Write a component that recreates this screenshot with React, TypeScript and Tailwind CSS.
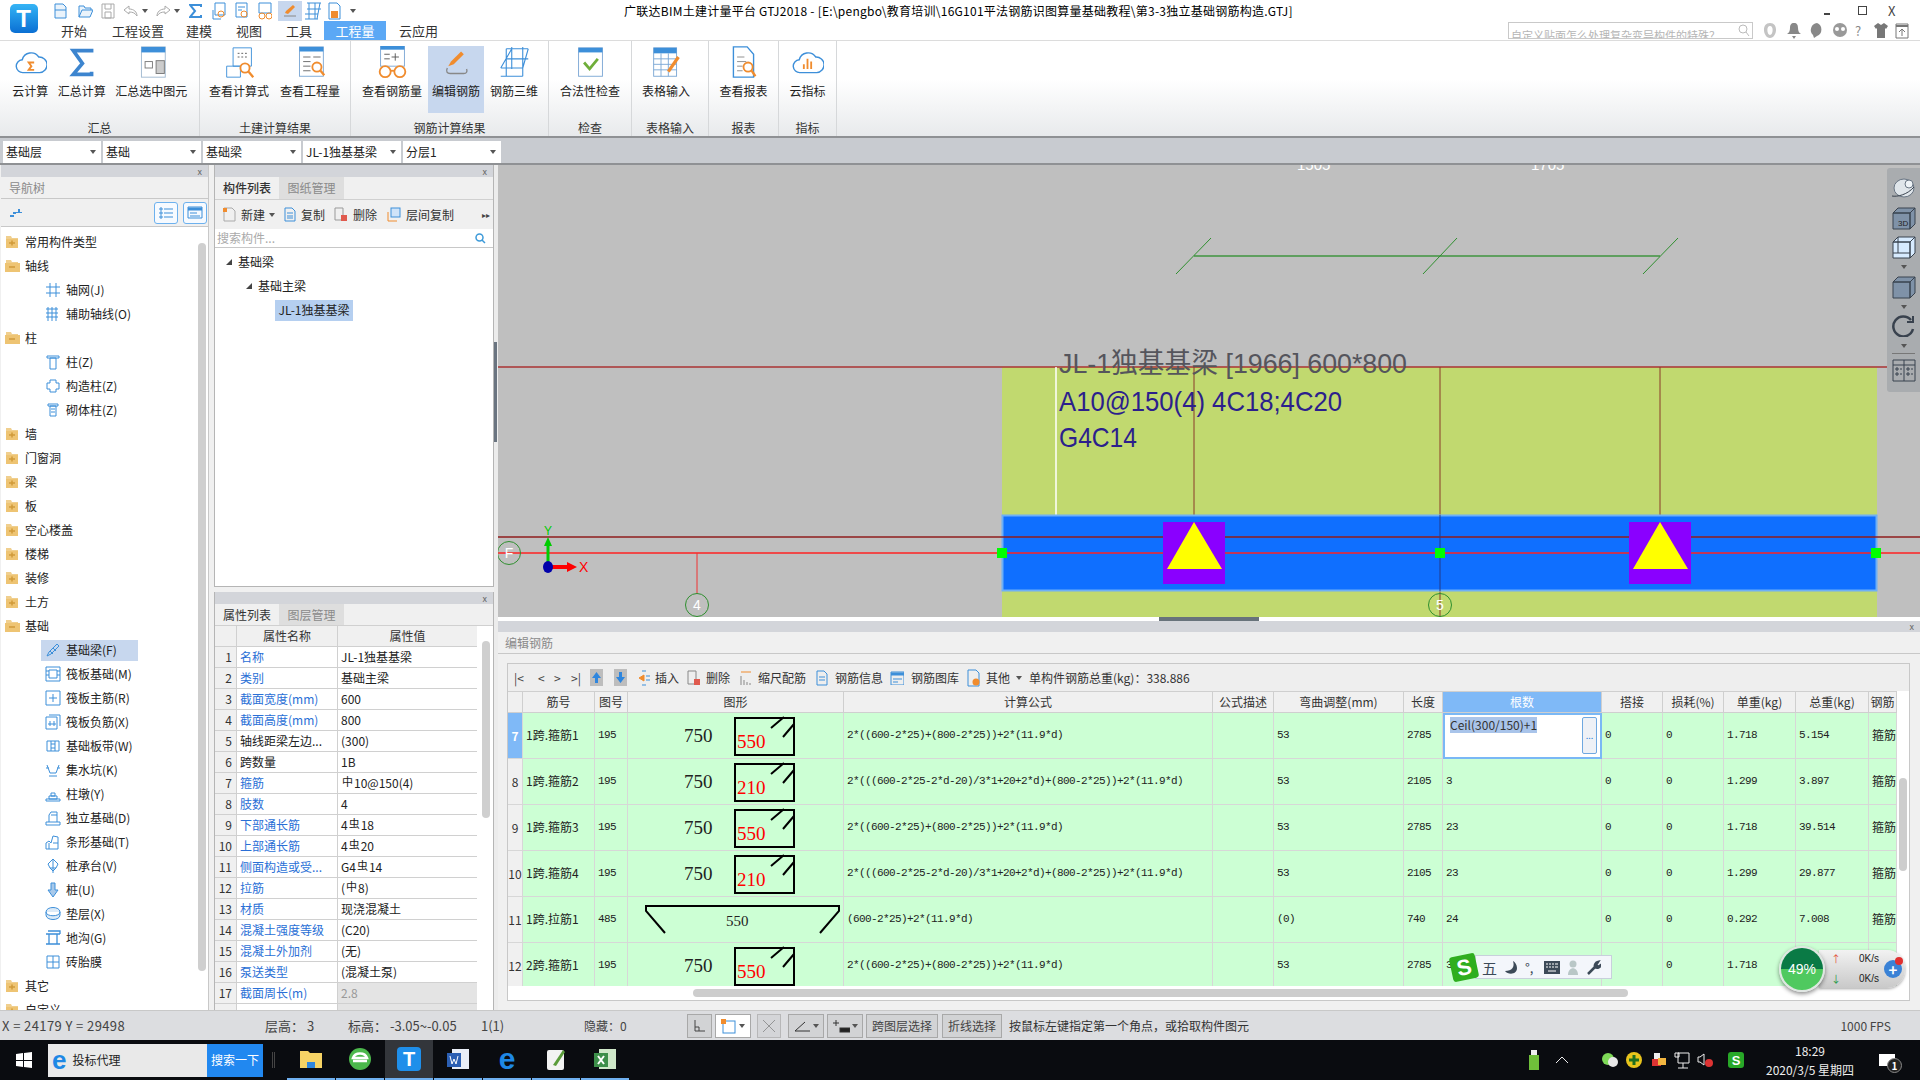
import type { ReactNode } from 'react';

const BLUE = '#3d8fd9';
const ORANGE = '#f08c2e';

function Ico({ w = 16, h = 16, vb, children }: { w?: number; h?: number; vb?: string; children: ReactNode }) {
  return (
    <svg width={w} height={h} viewBox={vb ?? `0 0 ${w} ${h}`} fill="none" stroke={BLUE} strokeWidth="1" className="shrink-0">
      {children}
    </svg>
  );
}

const ribbonIcons: Record<string, ReactNode> = {
  cloudSum: (
    <>
      <path d="M10 29a7 7 0 0 1-1-14 10 10 0 0 1 18-3 8 8 0 0 1 1 17z" strokeWidth="1.5" fill="#fff" />
      <path d="M22 18h-6l3 4-3 4h6" stroke={ORANGE} strokeWidth="2" />
    </>
  ),
  sigma: <path d="M29 7V5H9l10 14L9 31h20v-3" strokeWidth="4" stroke="#3d85cf" />,
  sumSel: (
    <>
      <rect x="7" y="1" width="26" height="33" fill="#fff" stroke="#9fb8d0" />
      <rect x="7" y="1" width="26" height="6" fill={BLUE} stroke="none" />
      <rect x="11" y="17" width="8" height="7" stroke="#777" />
      <rect x="23" y="16" width="9" height="14" fill="#ccc" stroke="#777" />
    </>
  ),
  viewCalc: (
    <>
      <path d="M11 2h20v20H11zM4 22h15v12H4z" fill="#fff" />
      <path d="M16 8h2M20 8h2M24 8h2M16 12h2M20 12h2M24 12h2" stroke="#555" />
      <circle cx="24" cy="24" r="5" stroke={ORANGE} strokeWidth="2" fill="#fff" />
      <path d="M28 28l5 6" stroke={ORANGE} strokeWidth="2.5" />
    </>
  ),
  viewQty: (
    <>
      <rect x="6" y="1" width="26" height="32" fill="#fff" stroke="#7aa6d4" />
      <rect x="6" y="1" width="26" height="5" fill={BLUE} stroke="none" />
      <path d="M10 12h8M21 12h8M10 17h8M10 22h8M10 27h8" stroke="#666" />
      <circle cx="25" cy="23" r="5" stroke={ORANGE} strokeWidth="2" fill="#fff" />
      <path d="M29 27l4 5" stroke={ORANGE} strokeWidth="2.5" />
    </>
  ),
  glasses: (
    <>
      <rect x="5" y="0" width="26" height="22" fill="#fff" stroke="#7aa6d4" />
      <rect x="5" y="0" width="26" height="4" fill={BLUE} stroke="none" />
      <path d="M9 9h6M9 14h6M21 8v8M17 12h8" stroke="#555" />
      <circle cx="10" cy="28" r="6" stroke={ORANGE} strokeWidth="2" fill="#fff" />
      <circle cx="26" cy="28" r="6" stroke={ORANGE} strokeWidth="2" fill="#fff" />
      <path d="M16 27h4" stroke={ORANGE} strokeWidth="2" />
    </>
  ),
  edit: (
    <>
      <path d="M9 22l3-5L23 6l3 3-11 11z" fill={ORANGE} stroke="none" />
      <path d="M8 24c-2 4 0 6 3 6h15c3 0 4-2 3-5" stroke="#888" strokeWidth="1.5" />
    </>
  ),
  rebar3d: <path d="M9 3h24M9 14h24M3 24h24M3 33h24M15 1v24M27 1v32M9 3v30M33 3L27 24M15 3L3 24" strokeWidth="1.2" />,
  check: (
    <>
      <rect x="5" y="2" width="26" height="31" fill="#fff" stroke="#7aa6d4" />
      <rect x="5" y="2" width="26" height="5" fill={BLUE} stroke="none" />
      <path d="M11 18l6 7 9-11" stroke="#6fae3a" strokeWidth="3" />
    </>
  ),
  table: (
    <>
      <rect x="4" y="2" width="25" height="31" fill="#fff" stroke="#7aa6d4" />
      <rect x="4" y="2" width="25" height="6" fill={BLUE} stroke="none" />
      <path d="M4 14h25M4 20h25M4 26h25M12 8v25M20 8v25" stroke="#7aa6d4" />
      <path d="M20 28L31 12" stroke={ORANGE} strokeWidth="3.5" />
    </>
  ),
  report: (
    <>
      <path d="M7 1h15l7 8v25H7z" fill="#fff" strokeWidth="1.5" />
      <path d="M11 12h8M11 17h10M11 22h6M11 27h6" stroke="#888" />
      <circle cx="23" cy="23" r="5" stroke={ORANGE} strokeWidth="2" fill="#fff" />
      <path d="M27 27l4 6" stroke={ORANGE} strokeWidth="2.5" />
    </>
  ),
  cloudBar: (
    <>
      <path d="M10 29a7 7 0 0 1-1-14 10 10 0 0 1 18-3 8 8 0 0 1 1 17z" strokeWidth="1.5" fill="#fff" />
      <path d="M14 25v-5M18 25V14M22 25v-8" stroke={ORANGE} strokeWidth="2" />
    </>
  ),
};

function RBtn({ icon, label, w, on }: { icon: string; label: string; w: number; on?: boolean }) {
  return (
    <div style={{ width: w }} className={`flex h-[67px] flex-col items-center ${on ? 'bg-[#c7d7ee]' : ''}`}>
      <div className="h-[33px]">
        <Ico w={33} h={33} vb="0 0 36 36">{ribbonIcons[icon]}</Ico>
      </div>
      <span className="mt-[3px] whitespace-nowrap text-[12px] leading-[18px] text-[#222]">{label}</span>
    </div>
  );
}

function RGroup({ w, label, pl = 0, children }: { w: number; label: string; pl?: number; children: ReactNode }) {
  return (
    <div style={{ width: w }} className="flex flex-col border-r border-[#d6d8da]">
      <div style={{ paddingLeft: pl }} className={`flex h-[72px] pt-[5px] ${pl ? '' : 'justify-center'}`}>{children}</div>
      <div className="mt-[6px] text-center text-[12px] leading-[18px] text-[#333]">{label}</div>
    </div>
  );
}

function Combo({ label }: { label: string }) {
  return (
    <div className="flex h-[22px] w-[98px] items-center justify-between bg-white pl-[3px] pr-[5px] text-[12px] text-[#222]">
      <span>{label}</span>
      <Caret />
    </div>
  );
}

function Folder({ open }: { open?: boolean }) {
  return (
    <svg width="16" height="14" viewBox="0 0 16 14" className="shrink-0">
      <path d="M2 1h5l1 2h6v10H2z" fill="#f0cf8e" />
      <rect x={open ? 1 : 2} y="4" width={open ? 15 : 12} height="9" fill="#eec473" />
      <path d={open ? 'M5 8h6' : 'M5 8h6M8 5.5v5'} stroke="#d19a3a" strokeWidth="1.5" />
    </svg>
  );
}

const treeIcons: Record<string, ReactNode> = {
  grid: <path d="M1 5h14M1 11h14M5 1v14M11 1v14" />,
  grid2: <path d="M1 3h12M1 7h12M1 11h12M3 1v14M7 1v14M11 1v14" />,
  col: <path d="M2 2h12v2H2zM5 4h6v11H5z" />,
  col2: <path d="M5 2h6v3h3v6h-3v3H5v-3H2V5h3z" />,
  col3: <path d="M3 2h10v2H3zM5 4h6v10H5zM6 7h4M6 10h4" />,
  beam: <path d="M2 14l2-4 8-8 2 2-8 8zM5 9l3 3M8 6l3 3" />,
  raft: <path d="M1 1h14v14H1zM4 4h8v8H4zM1 5h3M1 9h3M12 5h3M12 9h3" />,
  raftMain: <path d="M1 1h14v14H1zM8 4v8M4 8h8" />,
  raftNeg: <path d="M1 3h11v12H1zM4 1h11v11M5 7v5M9 7v5M3 10h8" />,
  strip: <path d="M2 3h12v10H2zM6 3v10M10 3v10M6 6h4M6 10h4" />,
  pit: <path d="M2 3l3 8h6l3-8M4 14h8M1 6h3M12 6h3" />,
  pier: <path d="M1 13h14v2H1zM4 10h8v3H4zM6 7h4v3H6z" />,
  iso: <path d="M1 12h14v3H1zM4 12V5l2-3h6v10M6 5h6" />,
  bar: <path d="M1 15V9l3-2 2 2 2-7 5 1v12zM4 15V9M8 9h5" />,
  cap: <path d="M8 1L3 6l2 4h6l2-4zM8 1v14M5 10l3 3 3-3" />,
  pile: <path d="M6 1h4v7h3l-5 7-5-7h3z" fill="#a8c9ea" />,
  pad: <path d="M1 6c0-6 14-6 14 0v3c0 6-14 6-14 0zM1 6c0 5 14 5 14 0" fill="#dceaf7" />,
  ditch: <path d="M1 4h14M3 1h12v3M4 4v10M12 4v10M1 14h14" strokeWidth="1.3" />,
  brick: <path d="M2 2h12v12H2zM8 2v12M2 8h12" />,
};

type TreeRow = { t: string; open?: boolean; icon?: string; sel?: boolean };
const tree: TreeRow[] = [
  { t: '常用构件类型' },
  { t: '轴线', open: true },
  { t: '轴网(J)', icon: 'grid' },
  { t: '辅助轴线(O)', icon: 'grid2' },
  { t: '柱', open: true },
  { t: '柱(Z)', icon: 'col' },
  { t: '构造柱(Z)', icon: 'col2' },
  { t: '砌体柱(Z)', icon: 'col3' },
  { t: '墙' },
  { t: '门窗洞' },
  { t: '梁' },
  { t: '板' },
  { t: '空心楼盖' },
  { t: '楼梯' },
  { t: '装修' },
  { t: '土方' },
  { t: '基础', open: true },
  { t: '基础梁(F)', icon: 'beam', sel: true },
  { t: '筏板基础(M)', icon: 'raft' },
  { t: '筏板主筋(R)', icon: 'raftMain' },
  { t: '筏板负筋(X)', icon: 'raftNeg' },
  { t: '基础板带(W)', icon: 'strip' },
  { t: '集水坑(K)', icon: 'pit' },
  { t: '柱墩(Y)', icon: 'pier' },
  { t: '独立基础(D)', icon: 'iso' },
  { t: '条形基础(T)', icon: 'bar' },
  { t: '桩承台(V)', icon: 'cap' },
  { t: '桩(U)', icon: 'pile' },
  { t: '垫层(X)', icon: 'pad' },
  { t: '地沟(G)', icon: 'ditch' },
  { t: '砖胎膜', icon: 'brick' },
  { t: '其它' },
  { t: '自定义' },
];

function Strip() {
  return (
    <div className="flex h-[12px] shrink-0 items-center justify-end bg-[#d3d5da] pr-[6px] text-[9px] leading-none text-[#666]">x</div>
  );
}

const Steel = ({ c }: { c: string }) => <span className="relative top-[-2px] mx-[1px] text-[11px]">{c}</span>;

const props: { n: string; v: ReactNode; link?: boolean; dim?: boolean }[] = [
  { n: '名称', v: 'JL-1独基基梁', link: true },
  { n: '类别', v: '基础主梁', link: true },
  { n: '截面宽度(mm)', v: '600', link: true },
  { n: '截面高度(mm)', v: '800', link: true },
  { n: '轴线距梁左边...', v: '(300)' },
  { n: '跨数量', v: '1B' },
  { n: '箍筋', v: <><Steel c="中" />10@150(4)</>, link: true },
  { n: '肢数', v: '4', link: true },
  { n: '下部通长筋', v: <>4<Steel c="虫" />18</>, link: true },
  { n: '上部通长筋', v: <>4<Steel c="虫" />20</>, link: true },
  { n: '侧面构造或受...', v: <>G4<Steel c="虫" />14</>, link: true },
  { n: '拉筋', v: <>(<Steel c="中" />8)</>, link: true },
  { n: '材质', v: '现浇混凝土', link: true },
  { n: '混凝土强度等级', v: '(C20)', link: true },
  { n: '混凝土外加剂', v: '(无)', link: true },
  { n: '泵送类型', v: '(混凝土泵)', link: true },
  { n: '截面周长(m)', v: '2.8', link: true, dim: true },
];

const F1 = '2*((600-2*25)+(800-2*25))+2*(11.9*d)';
const F2 = '2*(((600-2*25-2*d-20)/3*1+20+2*d)+(800-2*25))+2*(11.9*d)';
const rebarRows = [
  { no: '7', name: '1跨.箍筋1', fig: '195', inner: '550', f: F1, adj: '53', len: '2785', cnt: '', unit: '1.718', total: '5.154' },
  { no: '8', name: '1跨.箍筋2', fig: '195', inner: '210', f: F2, adj: '53', len: '2105', cnt: '3', unit: '1.299', total: '3.897' },
  { no: '9', name: '1跨.箍筋3', fig: '195', inner: '550', f: F1, adj: '53', len: '2785', cnt: '23', unit: '1.718', total: '39.514' },
  { no: '10', name: '1跨.箍筋4', fig: '195', inner: '210', f: F2, adj: '53', len: '2105', cnt: '23', unit: '1.299', total: '29.877' },
  { no: '11', name: '1跨.拉筋1', fig: '485', inner: '', f: '(600-2*25)+2*(11.9*d)', adj: '(0)', len: '740', cnt: '24', unit: '0.292', total: '7.008' },
  { no: '12', name: '2跨.箍筋1', fig: '195', inner: '550', f: F1, adj: '53', len: '2785', cnt: '3', unit: '1.718', total: '' },
];

function Stirrup({ inner }: { inner: string }) {
  return (
    <svg width="216" height="46" className="block">
      <text x="56" y="29" fontFamily="Liberation Serif" fontSize="19" fill="#222">750</text>
      <rect x="107" y="5" width="59" height="37" fill="none" stroke="#000" strokeWidth="2" />
      <text x="109" y="35" fontFamily="Liberation Serif" fontSize="19" fill="#f00">{inner}</text>
      <path d="M143 15l13-11M155 24l11-13" stroke="#000" strokeWidth="2" />
    </svg>
  );
}

function TieShape() {
  return (
    <svg width="216" height="46" className="block">
      <path d="M37 36L18 14V9h193v5l-19 22" fill="none" stroke="#000" strokeWidth="2" />
      <text x="98" y="29" fontFamily="Liberation Serif" fontSize="15" fill="#222">550</text>
    </svg>
  );
}

const GRID = 'grid grid-cols-[15px_72px_33px_216px_369px_61px_130px_39px_159px_61px_61px_72px_73px_28px]';
const cell = 'flex items-center overflow-hidden whitespace-nowrap border-r border-b border-[#d7d7d7] pb-[1px] pl-[3px]';
const mono = "font-['Liberation_Mono','Noto_Sans_CJK_SC',monospace] text-[11px] tracking-[-0.6px] text-[#222]";

function BarTool({ icon, label, w, gap = 5 }: { icon: ReactNode; label: string; w?: number; gap?: number }) {
  return (
    <div className="flex shrink-0 items-center" style={{ width: w, gap }}>
      {icon}
      <span className="whitespace-nowrap text-[12px] text-[#333]">{label}</span>
    </div>
  );
}

function StatusBox({ children, w, cls = '' }: { children: ReactNode; w: number; cls?: string }) {
  return (
    <div style={{ width: w }} className={`flex h-[24px] shrink-0 items-center justify-center gap-[2px] border border-[#a8a8a8] bg-[#d2d3d5] text-[12px] text-[#444] ${cls}`}>
      {children}
    </div>
  );
}

function Caret() {
  return <span className="inline-block h-0 w-0 shrink-0 border-x-[3px] border-t-[4px] border-x-transparent border-t-[#555]" />;
}

function AppSlot({ children, active }: { children: ReactNode; active?: boolean }) {
  return (
    <div className={`flex h-[40px] w-[48px] shrink-0 flex-col items-center justify-center border-b-2 border-[#6fb0f0] ${active ? 'bg-[#33363b]' : ''}`}>
      {children}
    </div>
  );
}

export default function App() {
  return (
    <div className="relative flex h-[1080px] w-[1920px] flex-col overflow-hidden bg-[#f0f0f0] font-['Noto_Sans_CJK_SC','Liberation_Sans',sans-serif] text-[12px]">
      {/* title bar and menu */}
      <div className="flex h-[41px] shrink-0 border-b border-[#dcdcdc] bg-white">
        <div className="flex w-[44px] shrink-0 items-center justify-center pb-[3px] pl-[3px]">
          <div className="flex h-[29px] w-[28px] items-center justify-center rounded-[5px] bg-gradient-to-b from-[#35b4f5] to-[#0b6fd3] font-['Liberation_Sans',sans-serif] text-[24px] font-bold leading-none text-white">T</div>
        </div>
        <div className="flex min-w-0 flex-1 flex-col">
          <div className="flex h-[21px] items-center">
            <div className="flex w-[580px] items-center text-[#5f8fc0]">
              <div className="ml-[10px] flex w-[24px]"><Ico w={13} h={16}><path d="M1 1h8l3 3v11H1zM1 7h11" fill="#eaf3fb" /></Ico></div>
              <div className="flex w-[23px]"><Ico w={15} h={16}><path d="M1 14V3h5l1 2h6v2M1 14l3-7h11l-3 7z" fill="#eaf3fb" /></Ico></div>
              <div className="flex w-[21px]"><Ico w={14} h={16}><path d="M1 1h12v14H1zM4 1v5h6V1M4 9h6v6H4z" stroke="#aaa" /></Ico></div>
              <div className="flex w-[32px] items-center gap-[2px]"><Ico w={18} h={14}><path d="M7 2L2 6l5 4V8c4 0 6 1 8 4 0-4-3-7-8-7z" stroke="#aaa" /></Ico><Caret /></div>
              <div className="flex w-[35px] items-center gap-[2px]"><Ico w={18} h={14}><path d="M11 2l5 4-5 4V8C7 8 5 9 3 12c0-4 3-7 8-7z" stroke="#aaa" /></Ico><Caret /></div>
              <div className="flex w-[23px]"><Ico w={13} h={16}><path d="M12 4V2H1l5 6-5 6h11v-2" strokeWidth="2" /></Ico></div>
              <div className="flex w-[23px]"><Ico w={14} h={18}><path d="M3 1h10v12H3zM1 8v9h8" /><circle cx="9" cy="12" r="3" stroke={ORANGE} /></Ico></div>
              <div className="flex w-[23px]"><Ico w={14} h={18}><path d="M1 1h11v14H1zM3 5h7M3 8h4" /><circle cx="9" cy="12" r="3" stroke={ORANGE} /></Ico></div>
              <div className="flex w-[20px]"><Ico w={14} h={18}><path d="M1 1h12v10H1z" /><circle cx="4" cy="14" r="3" stroke={ORANGE} /><circle cx="11" cy="14" r="3" stroke={ORANGE} /></Ico></div>
              <div className="flex h-[20px] w-[24px] items-center justify-center bg-[#c7d7ee]"><Ico w={16} h={16}><path d="M3 10l1-2 7-6 2 2-7 7z" fill={ORANGE} stroke="none" /><path d="M2 13h12" stroke="#888" /></Ico></div>
              <div className="ml-[2px] flex w-[24px]"><Ico w={17} h={18}><path d="M3 1h14M3 7h14M1 12h13M1 17h13M5 1v16M11 1v16M16 1l-3 16" /></Ico></div>
              <div className="flex w-[22px]"><Ico w={13} h={18}><path d="M1 1h8l3 3v13H1z" /><rect x="3" y="9" width="7" height="7" fill={ORANGE} stroke="none" /></Ico></div>
              <Caret />
            </div>
            <span className="whitespace-nowrap text-[12px] tracking-[0.25px] text-black">广联达BIM土建计量平台 GTJ2018 - [E:\pengbo\教育培训\16G101平法钢筋识图算量基础教程\第3-3独立基础钢筋构造.GTJ]</span>
            <div className="ml-auto flex w-[96px] items-center text-[#444]">
              <span className="h-[2px] w-[6px] translate-y-[3px] bg-[#444]" />
              <span className="ml-[28px] h-[9px] w-[9px] border border-[#444]" />
              <span className="ml-[21px] text-[13px] leading-none">X</span>
            </div>
          </div>
          <div className="flex h-[19px] items-stretch">
            <span className="ml-[17px] w-[51px] text-[13px] leading-[19px] text-[#333]">开始</span>
            <span className="w-[74px] text-[13px] leading-[19px] text-[#333]">工程设置</span>
            <span className="w-[50px] text-[13px] leading-[19px] text-[#333]">建模</span>
            <span className="w-[50px] text-[13px] leading-[19px] text-[#333]">视图</span>
            <span className="w-[38px] text-[13px] leading-[19px] text-[#333]">工具</span>
            <span className="w-[62px] bg-[#5ba8f5] text-center text-[13px] leading-[19px] text-white">工程量</span>
            <span className="ml-[13px] text-[13px] leading-[19px] text-[#333]">云应用</span>
            <div className="ml-auto flex items-center">
              <div className="flex h-[17px] w-[245px] items-end justify-between overflow-hidden border border-[#c9c9c9] px-[2px] text-[11px] leading-[12px] text-[#b5b5b5]">
                <span className="translate-y-[3px] whitespace-nowrap">自定义贴面怎么处理复杂变异构件的特殊？</span>
                <svg width="12" height="14" viewBox="0 0 12 14" fill="none" stroke="#bbb"><circle cx="5" cy="5" r="4" /><path d="M8 8l3 4" /></svg>
              </div>
              <div className="ml-[9px] flex w-[158px] items-center gap-[7px]">
                <svg width="17" height="17" viewBox="0 0 17 17" fill="#c4c4c4"><path d="M8 1c-9 0-7 15 0 15s9-15 0-15zm0 3c4 0 3 9 0 9s-4-9 0-9z" /></svg>
                <svg width="16" height="17" viewBox="0 0 16 17" fill="#888"><path d="M8 1c-3 0-4 2-4 5 0 3-1 5-3 6h14c-2-1-3-3-3-6 0-3-1-5-4-5zM6 14h4l-2 3z" /></svg>
                <svg width="16" height="17" viewBox="0 0 16 17" fill="#888"><path d="M8 1a7 7 0 0 0-4 12l1 3 3-2a7 7 0 0 0 0-13z" /></svg>
                <svg width="16" height="17" viewBox="0 0 16 17" fill="#999"><circle cx="8" cy="8" r="7" /><circle cx="5" cy="7" r="2" fill="#fff" /><circle cx="11" cy="7" r="2" fill="#fff" /></svg>
                <span className="w-[12px] text-[13px] leading-none text-[#888]">?</span>
                <svg width="14" height="17" viewBox="0 0 14 17" fill="#777"><path d="M4 1L0 4l2 3 1-1v10h8V6l1 1 2-3-4-3-3 2z" /></svg>
                <svg width="14" height="17" viewBox="0 0 14 17" fill="none" stroke="#777"><path d="M1 2h12v14H1z" /><path d="M1 4h12" strokeWidth="2" /><path d="M7 14V8M4 10l3-3 3 3" /></svg>
              </div>
            </div>
          </div>
        </div>
      </div>

      {/* ribbon */}
      <div className="flex h-[97px] shrink-0 border-b-2 border-[#8f9194] bg-gradient-to-b from-white from-40% to-[#e8eaec]">
        <RGroup w={200} label="汇总" pl={1}>
          <RBtn icon="cloudSum" label="云计算" w={59} />
          <RBtn icon="sigma" label="汇总计算" w={44} />
          <RBtn icon="sumSel" label="汇总选中图元" w={96} />
        </RGroup>
        <RGroup w={151} label="土建计算结果" pl={2}>
          <RBtn icon="viewCalc" label="查看计算式" w={74} />
          <RBtn icon="viewQty" label="查看工程量" w={68} />
        </RGroup>
        <RGroup w={198} label="钢筋计算结果" pl={5}>
          <RBtn icon="glasses" label="查看钢筋量" w={72} />
          <RBtn icon="edit" label="编辑钢筋" w={56} on />
          <RBtn icon="rebar3d" label="钢筋三维" w={60} />
        </RGroup>
        <RGroup w={83} label="检查"><RBtn icon="check" label="合法性检查" w={70} /></RGroup>
        <RGroup w={77} label="表格输入" pl={4}><RBtn icon="table" label="表格输入" w={60} /></RGroup>
        <RGroup w={70} label="报表"><RBtn icon="report" label="查看报表" w={60} /></RGroup>
        <RGroup w={58} label="指标"><RBtn icon="cloudBar" label="云指标" w={50} /></RGroup>
      </div>

      {/* combos */}
      <div className="flex h-[27px] shrink-0 items-start gap-[2px] border-b-2 border-[#8f9194] bg-[#c8cbd0] pl-[3px] pt-[3px]">
        <Combo label="基础层" />
        <Combo label="基础" />
        <Combo label="基础梁" />
        <Combo label="JL-1独基基梁" />
        <Combo label="分层1" />
      </div>

      <div className="flex min-h-0 flex-1">
        {/* navigation tree */}
        <div className="flex w-[209px] shrink-0 flex-col border-r border-[#c8c8c8] pl-[1px]">
          <Strip />
          <div className="flex h-[22px] shrink-0 items-center border-b border-[#c8c8c8] pl-[8px] text-[12px] text-[#8a8a8a]">导航树</div>
          <div className="flex h-[28px] shrink-0 items-center justify-between border-b border-[#c8c8c8] pl-[8px] pr-[1px]">
            <svg width="13" height="12" viewBox="0 0 13 12" fill={BLUE}><path d="M1 8h4v2H1zM7 5h2V2h2v3h2v1H7z" /><rect x="4" y="5" width="3" height="2" /></svg>
            <div className="flex gap-[5px]">
              <div className="flex h-[22px] w-[24px] items-center justify-center rounded-[3px] border border-[#6db1ee] bg-[#f6faff]">
                <Ico w={14} h={13}><path d="M1 2h2v2H1zM1 6h2v2H1zM1 10h2v2H1zM5 3h9M5 7h9M5 11h9" /></Ico>
              </div>
              <div className="flex h-[22px] w-[24px] items-center justify-center rounded-[3px] border border-[#6db1ee] bg-[#f6faff]">
                <Ico w={16} h={13}><path d="M1 1h14v11H1z" /><path d="M1 3h14" strokeWidth="3" /><path d="M3 7h7M3 10h10" /></Ico>
              </div>
            </div>
          </div>
          <div className="relative min-h-0 flex-1 overflow-hidden bg-white pt-[3px]">
            {tree.map((r) =>
              r.icon ? (
                <div key={r.t} className="flex h-[24px] items-center pl-[40px]">
                  <div className={`flex h-[21px] items-center gap-[5px] pl-[4px] pr-[4px] ${r.sel ? 'w-[97px] bg-[#c7d7ee]' : ''}`}>
                    <Ico w={16} h={16}>{treeIcons[r.icon]}</Ico>
                    <span className="whitespace-nowrap text-[12px] leading-none text-[#222]">{r.t}</span>
                  </div>
                </div>
              ) : (
                <div key={r.t} className="flex h-[24px] items-center gap-[5px] pl-[3px]">
                  <Folder open={r.open} />
                  <span className="whitespace-nowrap text-[12px] leading-none text-[#222]">{r.t}</span>
                </div>
              ),
            )}
            <div className="absolute left-[197px] top-[16px] h-[728px] w-[8px] rounded-full bg-[#cfcfcf]" />
          </div>
        </div>

        {/* component list and properties */}
        <div className="ml-[5px] flex w-[280px] shrink-0 flex-col">
          <div className="flex h-[422px] shrink-0 flex-col border-x border-b border-[#b5b5b5]">
            <Strip />
            <div className="flex h-[23px] shrink-0 items-stretch border-b border-[#d0d0d0]">
              <span className="flex w-[64px] items-center justify-center bg-[#f0f0f0] font-medium text-[#333]">构件列表</span>
              <span className="flex w-[65px] items-center justify-center bg-[#dedede] text-[#8a8a8a]">图纸管理</span>
            </div>
            <div className="flex h-[29px] shrink-0 items-center pl-[7px] text-[12px] text-[#333]">
              <BarTool w={47} icon={<Ico w={14} h={15}><path d="M2 1h8l3 3v10H2z" stroke="#aaa" /><path d="M1 1h4v4H1z" fill={ORANGE} stroke="none" /></Ico>} label="新建" />
              <span className="flex w-[15px]"><Caret /></span>
              <BarTool w={50} icon={<Ico w={12} h={15}><path d="M1 1h7l3 3v10H1zM3 6h6M3 9h6M3 11h6" /></Ico>} label="复制" />
              <BarTool w={53} icon={<Ico w={14} h={15}><path d="M1 1h8v12H1z" stroke="#999" /><rect x="7" y="8" width="6" height="6" fill="#e05a4e" stroke="none" /></Ico>} label="删除" />
              <BarTool icon={<Ico w={14} h={15}><rect x="4" y="1" width="9" height="9" fill="#cfe3f8" /><path d="M1 5v9h9" stroke={ORANGE} /></Ico>} label="层间复制" />
              <span className="ml-auto mr-[3px] text-[8px] text-[#444]">▸▸</span>
            </div>
            <div className="flex h-[19px] shrink-0 items-center justify-between border-b border-[#c8c8c8] bg-white pl-[2px] pr-[7px] text-[#aaa]">
              <span>搜索构件...</span>
              <svg width="11" height="11" viewBox="0 0 11 11" fill="none" stroke="#3d9ad9" strokeWidth="1.5"><circle cx="4.5" cy="4.5" r="3.5" /><path d="M7 7l3 3" /></svg>
            </div>
            <div className="min-h-0 flex-1 bg-white pt-[2px] text-[#222]">
              <div className="flex h-[24px] items-center gap-[6px] pl-[11px]"><span className="h-0 w-0 border-b-[6px] border-l-[6px] border-b-[#444] border-l-transparent" /><span>基础梁</span></div>
              <div className="flex h-[24px] items-center gap-[6px] pl-[31px]"><span className="h-0 w-0 border-b-[6px] border-l-[6px] border-b-[#444] border-l-transparent" /><span>基础主梁</span></div>
              <div className="flex h-[24px] items-center pl-[60px]"><span className="flex h-[21px] w-[78px] items-center justify-center bg-[#b5cff0]">JL-1独基基梁</span></div>
            </div>
          </div>
          <div className="mt-[5px] flex min-h-0 flex-1 flex-col border-x border-[#b5b5b5]">
            <Strip />
            <div className="flex h-[22px] shrink-0 items-stretch border-b border-[#d0d0d0]">
              <span className="flex w-[64px] items-center justify-center bg-[#f0f0f0] text-[#333]">属性列表</span>
              <span className="flex w-[65px] items-center justify-center bg-[#dedede] text-[#8a8a8a]">图层管理</span>
            </div>
            <div className="relative min-h-0 flex-1 overflow-hidden bg-white">
              <div className="grid w-[262px] grid-cols-[22px_101px_139px]">
                <div className="h-[21px] border-r border-b border-[#d0d0d0] bg-[#f0f0f0]" />
                <div className="flex h-[21px] items-center justify-center border-r border-b border-[#d0d0d0] bg-[#f0f0f0] text-[#333]">属性名称</div>
                <div className="flex h-[21px] items-center justify-center border-b border-[#d0d0d0] bg-[#f0f0f0] text-[#333]">属性值</div>
                {props.map((p, i) => (
                  <div key={p.n} className="contents">
                    <div className="flex h-[21px] items-center justify-end border-r border-b border-[#d0d0d0] bg-[#f0f0f0] pr-[4px] text-[#333]">{i + 1}</div>
                    <div className={`flex h-[21px] items-center overflow-hidden whitespace-nowrap border-r border-b border-[#d0d0d0] pl-[3px] ${p.link ? 'text-[#2a6fd6]' : 'text-[#222]'}`}>{p.n}</div>
                    <div className={`flex h-[21px] items-center whitespace-nowrap border-b border-[#d0d0d0] pl-[3px] ${p.dim ? 'bg-[#e4e4e4] text-[#999]' : 'text-[#222]'}`}>{p.v}</div>
                  </div>
                ))}
                <div className="h-[21px] border-r border-[#d0d0d0] bg-[#f0f0f0]" />
                <div className="h-[21px] border-r border-[#d0d0d0]" />
                <div className="h-[21px] bg-[#e4e4e4]" />
              </div>
              <div className="absolute left-[267px] top-[15px] h-[177px] w-[8px] rounded-full bg-[#cfcfcf]" />
            </div>
          </div>
        </div>

        {/* splitter */}
        <div className="flex w-[4px] shrink-0 flex-col bg-[#ececec] pt-[177px]">
          <div className="h-[100px] w-[3px] bg-[#6a7480]" />
        </div>

        {/* drawing area and rebar editor */}
        <div className="flex w-[1422px] shrink-0 flex-col">
          <div className="relative h-[452px] shrink-0 overflow-hidden bg-[#bfbfbf]">
            <svg width="1422" height="452" viewBox="498 165 1422 452" className="block">
              <text x="1297" y="170" fontFamily="Liberation Sans" fontSize="15" fill="#fff">1505</text>
              <text x="1531" y="170" fontFamily="Liberation Sans" fontSize="15" fill="#fff">1705</text>
              <path d="M1194 256h466" stroke="#5f9f5f" strokeWidth="2" />
              <path d="M1211 238l-35 36M1457 238l-34 36M1678 238l-35 36" stroke="#2f8f2f" />
              <rect x="1002" y="367" width="875" height="250" fill="#c1d96f" />
              <path d="M498 367h1390" stroke="#a33" strokeWidth="1.5" />
              <path d="M1056 367v148" stroke="#fff" strokeWidth="1.5" />
              <path d="M1194 367v155M1440 367v250M1660 367v155" stroke="#8a3a2a" />
              <rect x="1002.5" y="515.5" width="874" height="75" fill="#0f6fff" stroke="#6fb0f5" strokeWidth="2" />
              <path d="M498 537h1422" stroke="#8f1c1c" strokeWidth="1.5" />
              <path d="M498 553h1422" stroke="#f22" strokeWidth="1.5" />
              <path d="M697 553v41" stroke="#e33" />
              <path d="M1440 515v76" stroke="#223a8a" />
              <rect x="1163" y="522" width="62" height="62" fill="#8a00ff" />
              <rect x="1629" y="522" width="62" height="62" fill="#8a00ff" />
              <path d="M1194 522l28 47h-55z" fill="#ff0" />
              <path d="M1660 522l28 47h-55z" fill="#ff0" />
              <rect x="997" y="548" width="10" height="10" fill="#0f0" />
              <rect x="1435" y="548" width="10" height="10" fill="#0f0" />
              <rect x="1871" y="548" width="10" height="10" fill="#0f0" />
              <g fontFamily="Liberation Sans" fontSize="14" fill="#fff" textAnchor="middle" stroke="none">
                <text x="509" y="558">F</text>
                <text x="697" y="610">4</text>
                <text x="1440" y="610">5</text>
              </g>
              <g fill="none" stroke="#2f8f2f">
                <circle cx="509" cy="553" r="11.5" />
                <circle cx="697" cy="605" r="11.5" />
                <circle cx="1440" cy="605" r="11.5" />
              </g>
              <path d="M548 567v-24" stroke="#0c0" strokeWidth="3" />
              <path d="M548 537l-4 9h8z" fill="#0c0" />
              <path d="M548 567h20" stroke="#f00" strokeWidth="4" />
              <path d="M577 567l-10-5v10z" fill="#f00" />
              <ellipse cx="548" cy="567" rx="5" ry="6" fill="#00a" />
              <text x="544" y="535" fontFamily="Liberation Sans" fontSize="12" fill="#0c0">Y</text>
              <text x="579" y="572" fontFamily="Liberation Sans" fontSize="14" fill="#f00">X</text>
              <g fontFamily="Liberation Sans, Noto Sans CJK SC" fontSize="28" lengthAdjust="spacingAndGlyphs">
                <text x="1059" y="373" fill="#55555c" textLength="348" lengthAdjust="spacingAndGlyphs">JL-1独基基梁 [1966] 600*800</text>
                <text x="1059" y="411" fill="#2c1f8c" textLength="283" lengthAdjust="spacingAndGlyphs">A10@150(4) 4C18;4C20</text>
                <text x="1059" y="447" fill="#2c1f8c" textLength="78" lengthAdjust="spacingAndGlyphs">G4C14</text>
              </g>
            </svg>
            {/* view tools */}
            <div className="absolute right-0 top-[3px] flex h-[224px] w-[33px] flex-col items-center rounded-l-[3px] bg-[#a9acaf] pt-[9px]">
              <svg width="25" height="22" viewBox="0 0 25 22"><ellipse cx="13" cy="11" rx="10" ry="9" fill="#dfe5ea" stroke="#6a7684" /><circle cx="18" cy="7" r="4" fill="#eef3f7" stroke="#6a7684" /><path d="M1 19c5 1 15-1 22-9" fill="none" stroke="#39424e" /></svg>
              <svg className="mt-[8px]" width="24" height="23" viewBox="0 0 24 23" fill="#7f92a8" stroke="#39424e"><path d="M1 6h17v16H1zM1 6l5-5h17l-5 5zM18 6l5-5v16l-5 5z" /><text x="6" y="19" fontSize="8" fontFamily="Liberation Sans" fill="#222" stroke="none">3D</text></svg>
              <svg className="mt-[6px]" width="24" height="23" viewBox="0 0 24 23" fill="#d7ebff" stroke="#39424e"><path d="M1 6h17v16H1zM1 6l5-5h17l-5 5zM18 6l5-5v16l-5 5zM6 1v16H1M6 17h12" /></svg>
              <span className="mt-[6px] flex"><Caret /></span>
              <svg className="mt-[7px]" width="24" height="23" viewBox="0 0 24 23" fill="#7f92a8" stroke="#39424e"><path d="M1 6h17v16H1zM1 6l5-5h17l-5 5zM18 6l5-5v16l-5 5z" /></svg>
              <span className="mt-[6px] flex"><Caret /></span>
              <svg className="mt-[6px]" width="24" height="22" viewBox="0 0 24 22" fill="none" stroke="#39424e" strokeWidth="2.5"><path d="M19 5A10 10 0 1 0 21 14" /><path d="M21 1v6h-6" strokeWidth="2" /></svg>
              <span className="mt-[7px] flex"><Caret /></span>
              <div className="mt-[5px] h-[1px] w-[23px] bg-[#777]" />
              <svg className="mt-[5px]" width="24" height="23" viewBox="0 0 24 23" fill="none" stroke="#39424e"><path d="M1 1h22v21H1zM12 1v21M1 6h22" /><path d="M4 9h2v2H4zM8 10h2M4 14h2v2H4zM8 15h2M15 9h2v2h-2zM19 10h2M15 14h2v2h-2zM19 15h2" /></svg>
            </div>
          </div>
          <div className="flex h-[4px] shrink-0 justify-center bg-white">
            <div className="h-[4px] w-[100px] bg-[#68737b]" />
          </div>
          <div className="flex min-h-0 flex-1 flex-col">
            <div className="flex h-[11px] shrink-0 items-center justify-end bg-[#d3d5da] pr-[6px] text-[9px] leading-none text-[#666]">x</div>
            <div className="flex h-[22px] shrink-0 items-center border-b border-[#c8c8c8] pl-[7px] text-[#8a8a8a]">编辑钢筋</div>
            <div className="min-h-0 flex-1 pl-[9px] pr-[10px] pt-[9px]">
              <div className="flex h-[338px] w-[1403px] flex-col border border-[#c8c8c8] bg-white">
                <div className="flex h-[27px] shrink-0 items-center bg-[#eeeeee] pl-[6px]">
                  <span className="w-[24px] text-[12px] text-[#444]">|&lt;</span>
                  <span className="w-[16px] text-[12px] text-[#444]">&lt;</span>
                  <span className="w-[17px] text-[12px] text-[#444]">&gt;</span>
                  <span className="w-[19px] text-[12px] text-[#444]">&gt;|</span>
                  <div className="flex w-[24px]"><svg width="13" height="17" viewBox="0 0 13 17"><rect width="13" height="17" fill="#bdbdbd" /><path d="M6.5 3L2 9h3v5h3V9h3z" fill="#2e86de" /></svg></div>
                  <div className="flex w-[19px]"><svg width="13" height="17" viewBox="0 0 13 17"><rect width="13" height="17" fill="#bdbdbd" /><path d="M6.5 14L2 8h3V3h3v5h3z" fill="#2e86de" /></svg></div>
                  <div className="ml-[5px] flex items-center">
                    <BarTool w={49} icon={<Ico w={12} h={16}><path d="M4 1h4M4 15h4M8 6h4M8 10h4" /><path d="M1 8l5-3v6z" fill={ORANGE} stroke={ORANGE} /></Ico>} label="插入" />
                    <BarTool w={53} icon={<Ico w={14} h={16}><path d="M1 1h8v13H1z" stroke="#888" /><rect x="7" y="9" width="6" height="6" fill="#e05a4e" stroke="none" /></Ico>} label="删除" />
                    <BarTool w={76} gap={6} icon={<Ico w={12} h={16}><path d="M1 2h10" stroke={ORANGE} /><path d="M1 6v9M4 10v5M7 12v3M10 13v2" stroke="#888" /></Ico>} label="缩尺配筋" />
                    <BarTool w={74} gap={7} icon={<Ico w={12} h={16}><path d="M1 1h7l3 3v11H1zM3 7h6M3 10h6" /></Ico>} label="钢筋信息" />
                    <BarTool w={77} gap={7} icon={<Ico w={14} h={14}><path d="M1 1h13v13H1zM3 8h9M3 11h5" /><path d="M1 3h13" strokeWidth="3" /></Ico>} label="钢筋图库" />
                    <BarTool icon={<Ico w={14} h={18}><path d="M1 1h8l3 3v13H1z" /><circle cx="9" cy="13" r="3.5" fill={ORANGE} stroke="none" /></Ico>} label="其他" />
                    <span className="ml-[6px] flex"><Caret /></span>
                  </div>
                  <span className="ml-[7px] whitespace-nowrap text-[12px] text-[#333]">单构件钢筋总重(kg)：338.886</span>
                </div>
                <div className="flex min-h-0 flex-1">
                  <div className="w-[1389px] shrink-0">
                    <div className={`${GRID} h-[22px] bg-[#f0f0f0] text-[12px] text-[#333]`}>
                      {['', '筋号', '图号', '图形', '计算公式', '公式描述', '弯曲调整(mm)', '长度', '根数', '搭接', '损耗(%)', '单重(kg)', '总重(kg)', '钢筋'].map((h) => (
                        <div key={h} className={`flex items-center justify-center overflow-hidden whitespace-nowrap border-y border-r border-[#cfcfcf] ${h === '根数' ? 'border-[#6fb0f5] bg-[#7fb9f7] text-white' : ''}`}>{h}</div>
                      ))}
                    </div>
                    <div className="h-[273px] overflow-hidden">
                      {rebarRows.map((r) => (
                        <div key={r.no} className={`${GRID} h-[46px] bg-[#ccffd4]`}>
                          <div className={`flex items-center justify-center border-r border-b border-[#d7d7d7] ${r.no === '7' ? 'bg-[#7fb9f7] font-bold text-white' : 'bg-[#f0f0f0] text-[#333]'}`}>{r.no}</div>
                          <div className={`${cell} text-[12px] text-[#222]`}>{r.name}</div>
                          <div className={`${cell} ${mono}`}>{r.fig}</div>
                          <div className="overflow-hidden border-r border-b border-[#d7d7d7]">{r.inner ? <Stirrup inner={r.inner} /> : <TieShape />}</div>
                          <div className={`${cell} ${mono}`}>{r.f}</div>
                          <div className={cell} />
                          <div className={`${cell} ${mono}`}>{r.adj}</div>
                          <div className={`${cell} ${mono}`}>{r.len}</div>
                          {r.no === '7' ? (
                            <div className="relative border-2 border-[#7ab8f5] bg-white pl-[5px] pt-[1px]">
                              <span className="inline-block bg-[#a9c4ea] text-[12px] leading-[16px] text-[#333]">Ceil(300/150)+1</span>
                              <div className="absolute right-[3px] top-[2px] flex h-[37px] w-[15px] items-center justify-center rounded-[2px] border border-[#6fa8e0] bg-[#eef1f6] text-[9px] text-[#2e86de]">...</div>
                            </div>
                          ) : (
                            <div className={`${cell} ${mono}`}>{r.cnt}</div>
                          )}
                          <div className={`${cell} ${mono}`}>0</div>
                          <div className={`${cell} ${mono}`}>0</div>
                          <div className={`${cell} ${mono}`}>{r.unit}</div>
                          <div className={`${cell} ${mono}`}>{r.total}</div>
                          <div className={`${cell} text-[12px] text-[#222]`}>箍筋</div>
                        </div>
                      ))}
                    </div>
                    <div className="h-[14px] pl-[185px] pt-[3px]">
                      <div className="h-[8px] w-[935px] rounded-full bg-[#cdcdcd]" />
                    </div>
                  </div>
                  <div className="w-[14px] pl-[2px] pt-[87px]">
                    <div className="h-[93px] w-[8px] rounded-full bg-[#cdcdcd]" />
                  </div>
                </div>
              </div>
            </div>
          </div>
        </div>
      </div>

      {/* status bar */}
      <div className="flex h-[30px] shrink-0 items-center border-t border-[#c8c8c8] bg-[#dcdde0] pl-[2px] text-[12px] text-[#444]">
        <span className="w-[263px] whitespace-nowrap text-[13px] tracking-[0.4px]">X = 24179 Y = 29498</span>
        <span className="w-[83px] whitespace-nowrap text-[13px]">层高： 3</span>
        <span className="w-[133px] whitespace-nowrap text-[13px]">标高： -3.05~-0.05</span>
        <span className="w-[103px] whitespace-nowrap text-[13px]">1(1)</span>
        <span className="w-[103px] whitespace-nowrap">隐藏：0</span>
        <div className="flex items-center gap-[3px]">
          <StatusBox w={25}><svg width="13" height="14" viewBox="0 0 13 14" fill="none" stroke="#444"><path d="M2 1v11h10M2 8h4v4" /></svg></StatusBox>
          <StatusBox w={36} cls="border-[#3d9ae8] bg-white"><svg width="16" height="16" viewBox="0 0 16 16"><rect x="2" y="3" width="12" height="12" fill="none" stroke="#3d8fd9" /><rect x="0" y="1" width="5" height="5" fill={ORANGE} /></svg><Caret /></StatusBox>
          <StatusBox w={24} cls="ml-[3px] opacity-70"><svg width="16" height="16" viewBox="0 0 16 16" stroke="#777"><path d="M2 2l12 12M14 2L2 14" /></svg></StatusBox>
          <StatusBox w={36} cls="ml-[4px]"><svg width="17" height="14" viewBox="0 0 17 14" fill="none" stroke="#333"><path d="M1 12h15M1 12L11 3" /></svg><Caret /></StatusBox>
          <StatusBox w={36}><svg width="18" height="14" viewBox="0 0 18 14" stroke="#333"><path d="M4 1v6M1 4h6" /><rect x="8" y="9" width="10" height="4" fill="#222" /></svg><Caret /></StatusBox>
          <StatusBox w={72}>跨图层选择</StatusBox>
          <StatusBox w={60} cls="ml-[1px]">折线选择</StatusBox>
        </div>
        <span className="ml-[7px] whitespace-nowrap text-[#333]">按鼠标左键指定第一个角点，或拾取构件图元</span>
        <span className="ml-auto mr-[29px] whitespace-nowrap">1000 FPS</span>
      </div>

      {/* taskbar */}
      <div className="flex h-[40px] shrink-0 items-center bg-[#0a0c10] text-white">
        <div className="flex w-[48px] justify-center">
          <svg width="16" height="16" viewBox="0 0 16 16" fill="#fff"><path d="M0 2l7-1v7H0zM8 1l8-1v8H8zM0 9h7v6l-7-1zM8 9h8v7l-8-1z" /></svg>
        </div>
        <div className="flex h-[33px] w-[159px] items-center gap-[6px] bg-[#e9e9e9] pl-[4px] text-[12px] text-[#222]">
          <span className="font-['Liberation_Sans',sans-serif] text-[26px] font-bold leading-none text-[#1e88e5]">e</span>
          <span>投标代理</span>
        </div>
        <div className="flex h-[33px] w-[56px] items-center justify-center bg-[#2188f0] text-[12px] text-white">搜索一下</div>
        <div className="mx-[9px] h-[16px] w-[3px] border-x border-[#444]" />
        <div className="flex items-center gap-[1px] pl-[3px]">
          <AppSlot>
            <svg width="22" height="20" viewBox="0 0 22 20"><path d="M0 2h8l2 2h12v15H0z" fill="#f6d365" /><rect x="7" y="13" width="8" height="6" fill="#2e86de" /></svg>
          </AppSlot>
          <AppSlot>
            <svg width="24" height="24" viewBox="0 0 24 24"><circle cx="12" cy="12" r="11" fill="#4cb84c" /><path d="M5 11c2-6 12-6 14 0zM5 14h14" stroke="#fff" strokeWidth="2.5" fill="none" /></svg>
          </AppSlot>
          <AppSlot active>
            <div className="flex h-[24px] w-[24px] items-center justify-center rounded-[4px] bg-[#1f8fea] font-['Liberation_Sans',sans-serif] text-[20px] font-bold leading-none text-white">T</div>
          </AppSlot>
          <AppSlot>
            <svg width="24" height="24" viewBox="0 0 24 24"><rect x="6" y="2" width="17" height="20" fill="#e9eef7" /><rect x="1" y="6" width="14" height="14" fill="#2b5fb3" /><path d="M4 9l2 8 2-5 2 5 2-8" stroke="#fff" fill="none" /></svg>
          </AppSlot>
          <AppSlot>
            <span className="font-['Liberation_Sans',sans-serif] text-[30px] font-bold leading-none text-[#1e88e5]">e</span>
          </AppSlot>
          <AppSlot>
            <svg width="22" height="24" viewBox="0 0 22 24"><rect x="2" y="3" width="17" height="20" rx="2" fill="#f3f3f3" /><path d="M8 18L18 3l2 2-9 14z" fill="#5a9c3a" /></svg>
          </AppSlot>
          <AppSlot>
            <svg width="24" height="24" viewBox="0 0 24 24"><rect x="6" y="2" width="17" height="20" fill="#cfe8c9" /><rect x="1" y="6" width="14" height="14" fill="#3d8f4a" /><path d="M5 9l6 8M11 9l-6 8" stroke="#fff" strokeWidth="2" /></svg>
          </AppSlot>
        </div>
        <div className="ml-[891px] flex items-center">
          <div className="flex w-[28px] justify-center"><svg width="10" height="20" viewBox="0 0 10 20"><rect x="2" y="0" width="6" height="5" fill="#eee" /><rect y="5" width="10" height="15" fill="#6fbf3a" /></svg></div>
          <div className="flex w-[28px] justify-center"><svg width="14" height="8" viewBox="0 0 14 8" fill="none" stroke="#eee"><path d="M1 7l6-6 6 6" /></svg></div>
          <div className="ml-[21px] flex w-[25px] justify-center"><svg width="18" height="18" viewBox="0 0 18 18"><circle cx="7" cy="8" r="6" fill="#7ed957" /><circle cx="12" cy="11" r="5" fill="#e8e8e8" /></svg></div>
          <div className="flex w-[24px] justify-center"><svg width="18" height="18" viewBox="0 0 18 18"><circle cx="9" cy="9" r="8" fill="#e8c41c" /><path d="M9 4v10M4 9h10" stroke="#1f6f1f" strokeWidth="3" /></svg></div>
          <div className="flex w-[24px] justify-center"><svg width="18" height="18" viewBox="0 0 18 18"><path d="M5 2h6v6H5z" fill="#eee" /><path d="M3 8h9v7H3z" fill="#d33" /><rect x="9" y="7" width="8" height="7" fill="#f2b640" /></svg></div>
          <div className="flex w-[24px] justify-center"><svg width="16" height="17" viewBox="0 0 16 17" fill="none" stroke="#eee"><path d="M4 1h11v10H4zM1 4v0M9 11v5M4 16h10M1 1h4v4H1z" /></svg></div>
          <div className="flex w-[22px] justify-center"><svg width="16" height="16" viewBox="0 0 16 16"><path d="M1 5h2l4-3v11L3 10H1z" fill="none" stroke="#eee" /><circle cx="12" cy="11" r="4" fill="#d33" /></svg></div>
          <div className="ml-[12px] flex h-[16px] w-[16px] items-center justify-center rounded-[3px] bg-[#28a828] font-['Liberation_Sans',sans-serif] text-[13px] font-bold leading-none text-white">S</div>
        </div>
        <div className="ml-[20px] flex w-[92px] flex-col items-center text-[12px] leading-[19px] text-[#eee]">
          <span>18:29</span>
          <span className="whitespace-nowrap">2020/3/5 星期四</span>
        </div>
        <div className="relative ml-[23px] h-[12px] w-[16px] bg-white">
          <span className="absolute left-[8px] top-[4px] flex h-[15px] w-[15px] items-center justify-center rounded-full border border-[#888] bg-[#222] text-[10px] font-bold text-white">1</span>
        </div>
      </div>

      {/* Sogou input bar, floats over the table */}
      <div className="absolute left-[1451px] top-[955px] flex h-[24px] items-center">
        <div className="z-10 flex h-[25px] w-[26px] -rotate-12 items-center justify-center rounded-[3px] bg-[#2fae1f] font-['Liberation_Sans',sans-serif] text-[22px] font-bold leading-none text-white">S</div>
        <div className="-ml-[2px] flex h-[24px] w-[137px] items-center gap-[7px] border border-[#c8d0dc] bg-[#f3f6fb] pl-[6px] text-[15px] leading-none text-[#3c4a58]">
          <span>五</span>
          <svg width="14" height="15" viewBox="0 0 14 15" fill="#3c4a58"><path d="M9 1c2 6-1 10-8 10 3 4 12 4 12-3 0-3-2-6-4-7z" /></svg>
          <span className="w-[12px] text-[13px]">°,</span>
          <svg width="16" height="13" viewBox="0 0 16 13" fill="#3c4a58"><path d="M0 0h16v13H0z" /><path d="M2 3h2M5 3h2M8 3h2M11 3h3M2 6h2M5 6h2M8 6h2M11 6h3M4 10h8" stroke="#fff" /></svg>
          <svg width="12" height="15" viewBox="0 0 12 15" fill="#b9c7c7"><circle cx="6" cy="4" r="3.5" /><path d="M1 15c0-9 10-9 10 0z" /></svg>
          <svg width="15" height="15" viewBox="0 0 15 15" fill="none" stroke="#3c4a58" strokeWidth="2.5"><path d="M2 14l7-7M9 7a4 4 0 0 1 3-5l-2 3 2 2 3-2a4 4 0 0 1-6 2" /></svg>
        </div>
      </div>

      {/* network speed widget */}
      <div className="absolute left-[1779px] top-[946px] flex items-center">
        <div className="z-10 flex h-[46px] w-[46px] flex-col overflow-hidden rounded-full border-2 border-[#dfe6e2] shadow-[0_2px_4px_rgba(0,0,0,0.45)]">
          <div className="relative flex-1 bg-[#0a7a45]" />
          <div className="flex-1 bg-[#4fc95f]" />
          <span className="absolute inset-x-0 top-[14px] w-[46px] text-center font-['Liberation_Sans',sans-serif] text-[14px] leading-[18px] text-white">49%</span>
        </div>
        <div className="-ml-[6px] flex h-[38px] w-[86px] items-center rounded-r-[18px] bg-gradient-to-b from-[#f2f2f2] to-[#c9c9c9] pl-[12px] shadow-[0_1px_3px_rgba(0,0,0,0.35)]">
          <div className="flex w-[18px] flex-col text-[10px] leading-[20px]">
            <span className="text-[#e2533f]">↑</span>
            <span className="text-[#2a9a4a]">↓</span>
          </div>
          <div className="flex w-[30px] flex-col text-right font-['Liberation_Sans',sans-serif] text-[10px] leading-[20px] text-[#222]">
            <span>0K/s</span>
            <span>0K/s</span>
          </div>
          <div className="relative ml-[5px] flex h-[18px] w-[18px] items-center justify-center rounded-full bg-[#3a82d6] text-[15px] font-bold leading-none text-white">
            +
            <span className="absolute -right-[1px] -top-[3px] h-[8px] w-[8px] rounded-full bg-[#e03030]" />
          </div>
        </div>
      </div>
    </div>
  );
}
